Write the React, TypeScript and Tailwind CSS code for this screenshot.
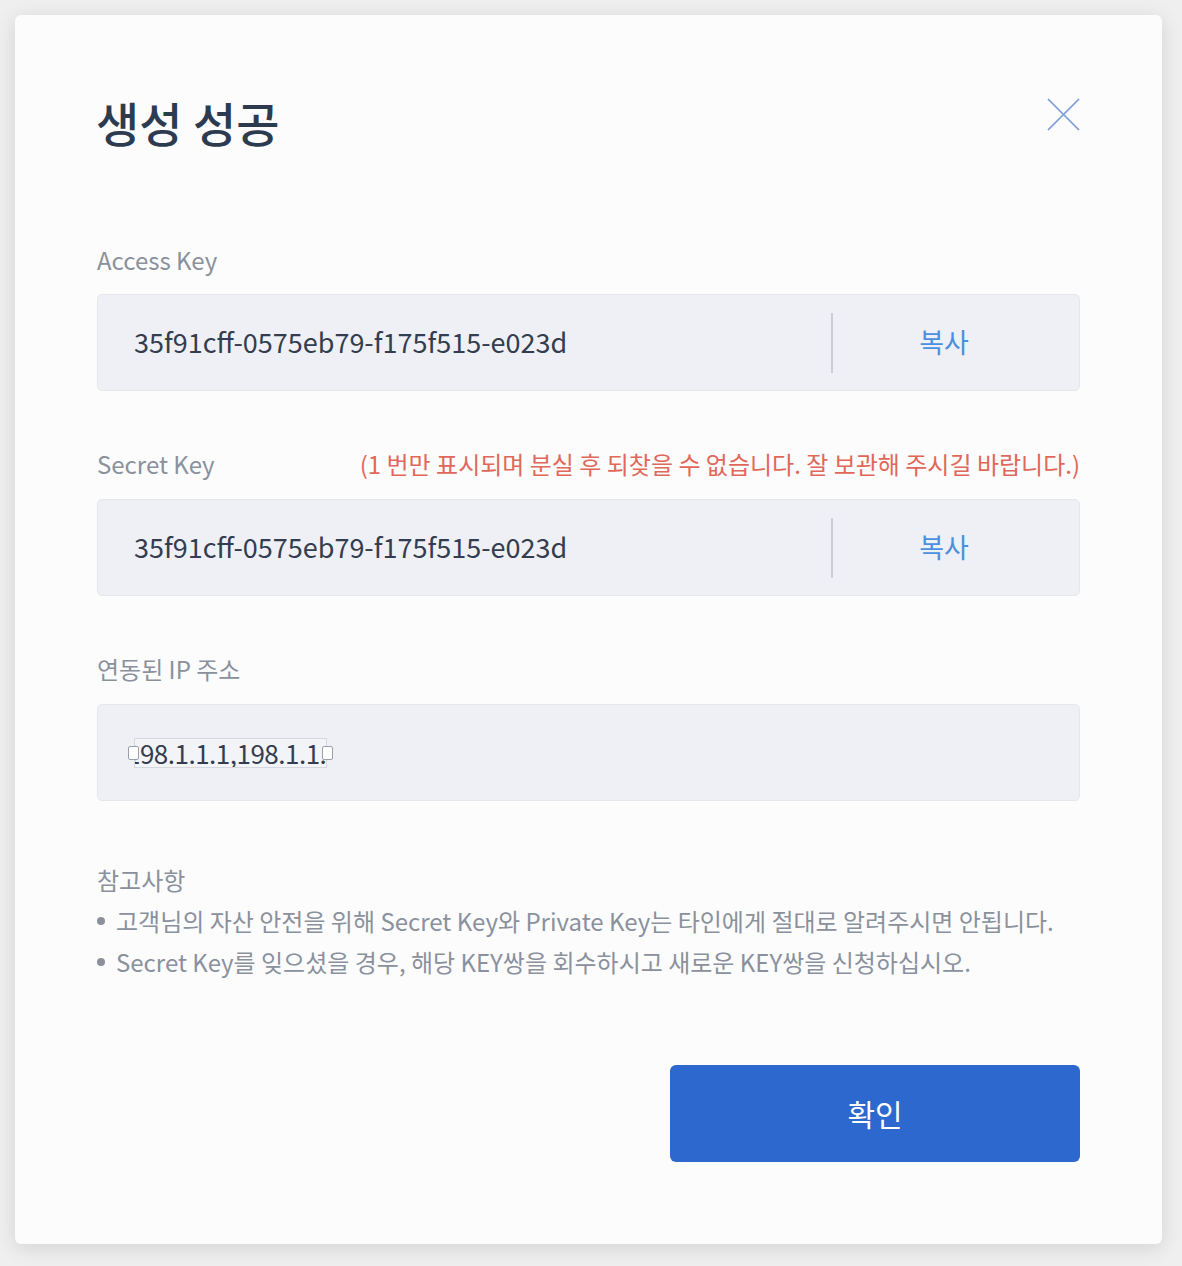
import React from "react";

const font = "font-['Noto_Sans_CJK_KR','Noto_Sans',sans-serif]";

function KeyField({ value }: { value: string }) {
	return (
		<div className="flex h-[97px] items-center rounded-[5px] border border-[#e5e7ed] bg-[#eff0f5] pl-[36px] pr-6">
			<span className="flex-1 text-[27px] text-[#333d4f]">{value}</span>
			<div className="h-[60px] w-[2px] bg-[#c9cdd7]"></div>
			<button className="w-[222px] text-center text-[27px] text-[#4a8fe0]">복사</button>
		</div>
	);
}

export default function App() {
	return (
		<div className={`min-h-[1266px] bg-[#efefef] pb-[15px] pl-[15px] pr-[20px] pt-[15px] ${font}`}>
			<div className="rounded-[6px] bg-[#fcfcfc] px-[82px] pb-[82px] pt-[77px] shadow-[0_4px_20px_rgba(0,0,0,0.12)]">
				{/* header */}
				<div className="flex items-start justify-between">
					<h1 className="-ml-[1px] text-[47px] leading-[60px] font-medium text-[#2c3b50]">생성 성공</h1>
					<button className="mt-[6px]">
						<svg width="33" height="33" viewBox="0 0 33 33" fill="none">
							<path d="M1 1L32 32M32 1L1 32" stroke="#7b9bd8" strokeWidth="1.75" />
						</svg>
					</button>
				</div>

				{/* access key */}
				<div className="mt-[92px]">
					<div className="mb-[18px] text-[24px] leading-[32px] text-[#8a919d]">Access Key</div>
					<KeyField value="35f91cff-0575eb79-f175f515-e023d" />
				</div>

				{/* secret key */}
				<div className="mt-[57px]">
					<div className="mb-[19px] flex items-center justify-between text-[24px] leading-[32px]">
						<span className="text-[#8a919d]">Secret Key</span>
						<span className="text-[#e0685b]">(1 번만 표시되며 분실 후 되찾을 수 없습니다. 잘 보관해 주시길 바랍니다.)</span>
					</div>
					<KeyField value="35f91cff-0575eb79-f175f515-e023d" />
				</div>

				{/* ip */}
				<div className="mt-[57px]">
					<div className="mb-[19px] text-[24px] leading-[32px] text-[#8a919d]">연동된 IP 주소</div>
					<div className="flex h-[97px] items-center rounded-[5px] border border-[#e5e7ed] bg-[#eff0f5] pl-[36px]">
						<div className="relative">
							<div className="h-[30px] w-[193px] overflow-hidden border border-[#d5d8df] bg-[#f3f4f7]">
								<span className="-ml-[9px] block whitespace-nowrap text-[26px] leading-[28px] tracking-[-0.5px] text-[#333d4f]">
									198.1.1.1,198.1.1.1
								</span>
							</div>
							<div className="absolute -left-[6px] top-[8px] h-[14px] w-[11px] rounded-[2px] border border-[#9aa0aa] bg-white"></div>
							<div className="absolute -right-[6px] top-[8px] h-[14px] w-[11px] rounded-[2px] border border-[#9aa0aa] bg-white"></div>
						</div>
					</div>
				</div>

				{/* notes */}
				<div className="mt-[58px] text-[24px] leading-[41px] text-[#8a919d]">
					<div>참고사항</div>
					<div className="flex items-center">
						<span className="mr-[11px] h-[8px] w-[8px] rounded-full bg-[#8a919d]"></span>
						고객님의 자산 안전을 위해 Secret Key와 Private Key는 타인에게 절대로 알려주시면 안됩니다.
					</div>
					<div className="flex items-center">
						<span className="mr-[11px] h-[8px] w-[8px] rounded-full bg-[#8a919d]"></span>
						Secret Key를 잊으셨을 경우, 해당 KEY쌍을 회수하시고 새로운 KEY쌍을 신청하십시오.
					</div>
				</div>

				{/* confirm */}
				<div className="mt-[83px] flex justify-end">
					<button className="h-[97px] w-[410px] rounded-[6px] bg-[#2c68cd] text-[30px] text-white">확인</button>
				</div>
			</div>
		</div>
	);
}
